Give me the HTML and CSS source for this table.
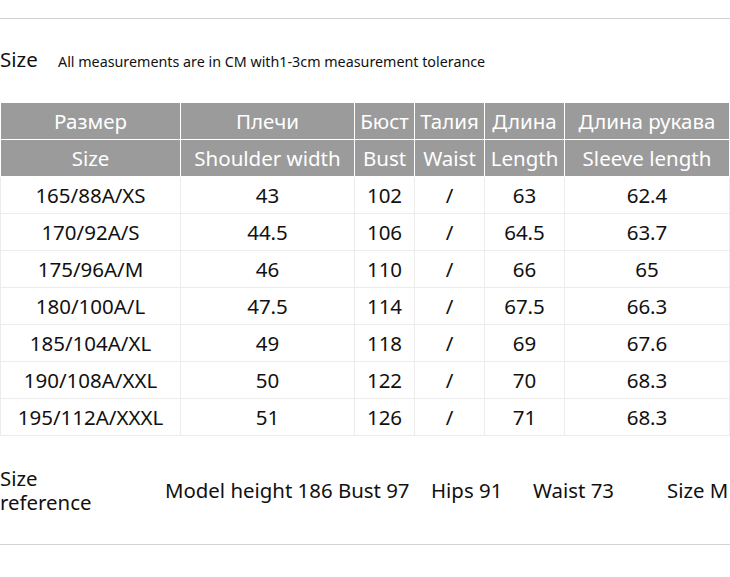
FILE: index.html
```html
<!DOCTYPE html>
<html>
<head>
<meta charset="utf-8">
<link rel="stylesheet" href="styles.css">
</head>
<body>
<div class="page">
  <div class="rule top-rule"></div>
  <div class="title-row">
    <span class="title">Size</span>
    <span class="note">All measurements are in CM with1-3cm measurement tolerance</span>
  </div>
  <table class="chart">
    <colgroup>
      <col class="c1"><col class="c2"><col class="c3"><col class="c4"><col class="c5"><col class="c6">
    </colgroup>
    <thead>
      <tr><th>Размер</th><th>Плечи</th><th>Бюст</th><th>Талия</th><th>Длина</th><th>Длина рукава</th></tr>
      <tr><th>Size</th><th>Shoulder width</th><th>Bust</th><th>Waist</th><th>Length</th><th>Sleeve length</th></tr>
    </thead>
    <tbody>
      <tr><td>165/88A/XS</td><td>43</td><td>102</td><td>/</td><td>63</td><td>62.4</td></tr>
      <tr><td>170/92A/S</td><td>44.5</td><td>106</td><td>/</td><td>64.5</td><td>63.7</td></tr>
      <tr><td>175/96A/M</td><td>46</td><td>110</td><td>/</td><td>66</td><td>65</td></tr>
      <tr><td>180/100A/L</td><td>47.5</td><td>114</td><td>/</td><td>67.5</td><td>66.3</td></tr>
      <tr><td>185/104A/XL</td><td>49</td><td>118</td><td>/</td><td>69</td><td>67.6</td></tr>
      <tr><td>190/108A/XXL</td><td>50</td><td>122</td><td>/</td><td>70</td><td>68.3</td></tr>
      <tr><td>195/112A/XXXL</td><td>51</td><td>126</td><td>/</td><td>71</td><td>68.3</td></tr>
    </tbody>
  </table>
  <div class="ref-row">
    <div class="ref-label">
      <div class="ref-line">Size</div>
      <div class="ref-line">reference</div>
    </div>
    <span class="ref-model">Model height 186 Bust 97</span>
    <span class="ref-hips">Hips 91</span>
    <span class="ref-waist">Waist 73</span>
    <span class="ref-size">Size M</span>
  </div>
  <div class="rule bottom-rule"></div>
</div>
</body>
</html>
```

FILE: styles.css
```css
html, body {
  margin: 0;
  padding: 0;
  background: #ffffff;
}
.page {
  width: 730px;
  font-family: "Noto Sans", "Open Sans", sans-serif;
  color: #111;
  padding-top: 18px;
}
.rule {
  height: 1px;
  background: #d2d2d2;
}
.title-row {
  display: flex;
  align-items: baseline;
  margin-top: 26px;
  height: 28px;
}
.title {
  font-size: 20.5px;
  width: 58px;
}
.note {
  font-size: 14.3px;
}
.chart {
  margin-top: 29px;
  border-collapse: collapse;
  table-layout: fixed;
  width: 729px;
}
.c1 { width: 180px; }
.c2 { width: 174px; }
.c3 { width: 60px; }
.c4 { width: 70px; }
.c5 { width: 80px; }
.c6 { width: 165px; }
.chart th {
  background: #9b9b9b;
  color: #ffffff;
  font-weight: normal;
  font-size: 20.5px;
  line-height: 24px;
  height: 35px;
  padding: 0 0 1px;
  border: 1px solid #ffffff;
  white-space: nowrap;
  overflow: hidden;
}
.chart td {
  font-size: 20.5px;
  line-height: 24px;
  text-align: center;
  height: 35px;
  padding: 0 0 1px;
  border: 1px solid #ececec;
  white-space: nowrap;
}
.ref-row {
  display: flex;
  align-items: center;
  height: 108px;
  font-size: 20.4px;
}
.ref-label {
  width: 165px;
}
.ref-line {
  line-height: 24px;
}
.ref-model { width: 266px; }
.ref-hips { width: 102px; }
.ref-waist { width: 134px; }
.ref-size { white-space: nowrap; }
```
